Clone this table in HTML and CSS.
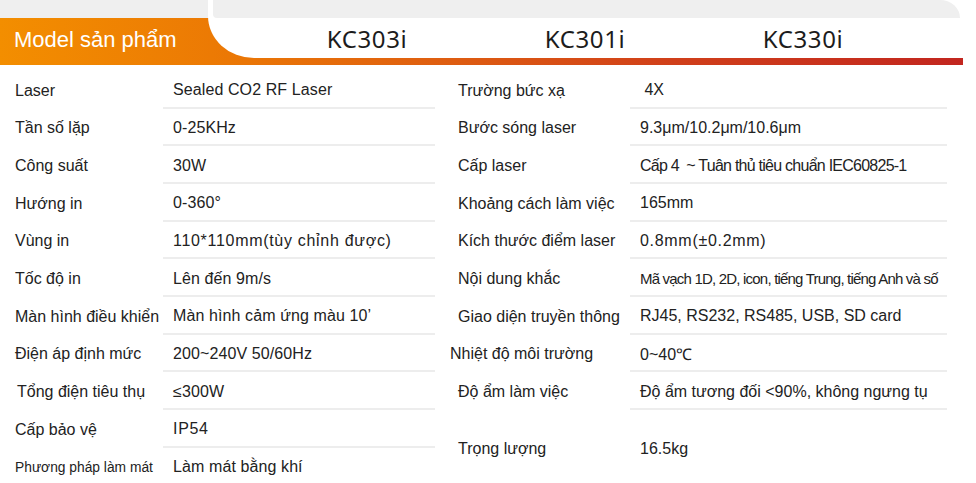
FILE: index.html
```html
<!DOCTYPE html>
<html lang="vi">
<head>
<meta charset="utf-8">
<title>Model sản phẩm</title>
<link rel="stylesheet" href="styles.css">
</head>
<body>
<div class="page">
  <div class="head">
    <div class="tab">
      <div class="tab-top"></div>
      <div class="tab-title">Model sản phẩm</div>
    </div>
    <div class="models">
      <div class="models-panel">
        <div class="models-top"></div>
        <div class="models-names">
          <span class="model">KC303i</span>
          <span class="model">KC301i</span>
          <span class="model">KC330i</span>
        </div>
      </div>
    </div>
  </div>

  <div class="specs">
    <div class="table left">
      <div class="label">Laser</div><div class="value">Sealed CO2 RF Laser</div>
      <div class="label">Tần số lặp</div><div class="value">0-25KHz</div>
      <div class="label">Công suất</div><div class="value">30W</div>
      <div class="label">Hướng in</div><div class="value">0-360°</div>
      <div class="label">Vùng in</div><div class="value wide">110*110mm(tùy chỉnh được)</div>
      <div class="label">Tốc độ in</div><div class="value">Lên đến 9m/s</div>
      <div class="label">Màn hình điều khiển</div><div class="value">Màn hình cảm ứng màu 10’</div>
      <div class="label">Điện áp định mức</div><div class="value">200~240V 50/60Hz</div>
      <div class="label shift">Tổng điện tiêu thụ</div><div class="value">≤300W</div>
      <div class="label">Cấp bảo vệ</div><div class="value wide">IP54</div>
      <div class="label small">Phương pháp làm mát</div><div class="value last">Làm mát bằng khí</div>
    </div>
    <div class="table right">
      <div class="label">Trường bức xạ</div><div class="value">&nbsp;4X</div>
      <div class="label">Bước sóng laser</div><div class="value">9.3μm/10.2μm/10.6μm</div>
      <div class="label">Cấp laser</div><div class="value tight">Cấp 4&nbsp; ~ Tuân thủ tiêu chuẩn IEC60825-1</div>
      <div class="label">Khoảng cách làm việc</div><div class="value">165mm</div>
      <div class="label">Kích thước điểm laser</div><div class="value wide">0.8mm(±0.2mm)</div>
      <div class="label">Nội dung khắc</div><div class="value tighter">Mã vạch 1D, 2D, icon, tiếng Trung, tiếng Anh và số</div>
      <div class="label">Giao diện truyền thông</div><div class="value">RJ45, RS232, RS485, USB, SD card</div>
      <div class="label out">Nhiệt độ môi trường</div><div class="value">0~40℃</div>
      <div class="label">Độ ẩm làm việc</div><div class="value">Độ ẩm tương đối &lt;90%, không ngưng tụ</div>
      <div class="label tall">Trọng lượng</div><div class="value tall last">16.5kg</div>
    </div>
  </div>
</div>
</body>
</html>
```

FILE: styles.css
```css
* { box-sizing: border-box; }

html, body {
  margin: 0;
  padding: 0;
  background: #ffffff;
}

body {
  font-family: "Liberation Sans", Arial, sans-serif;
  color: #222222;
}

.page {
  width: 976px;
  height: 483px;
  overflow: hidden;
}

/* ---------- header ---------- */
.head {
  display: flex;
  width: 963px;
  height: 65px;
  background: linear-gradient(90deg, #f38e00 0%, #ec7a04 22%, #df5f10 45%, #d03f1a 70%, #c2261f 100%) 0 18px / 100% 47px no-repeat;
}

.tab {
  width: 208px;
  display: flex;
  flex-direction: column;
}

.tab-top {
  height: 18px;
  background: #efefef;
}

.tab-title {
  flex: 1;
  color: #ffffff;
  font-size: 22px;
  padding-left: 14px;
  display: flex;
  align-items: center;
  padding-bottom: 3px;
}

.models {
  flex: 1;
}

.models-panel {
  height: 58px;
  background: #ffffff;
  border-bottom-left-radius: 46px 42px;
  display: flex;
  flex-direction: column;
}

.models-top {
  height: 18px;
  margin-left: 5px;
  margin-right: 3px;
  background: #efefef;
  border-top-right-radius: 20px 18px;
  border-bottom-left-radius: 4px;
}

.models-names {
  flex: 1;
  display: flex;
  align-items: center;
  padding-left: 50px;
  padding-top: 1px;
}

.model {
  width: 218px;
  text-align: center;
  font-family: "Noto Sans", "Open Sans", sans-serif;
  font-size: 24px;
  letter-spacing: 0.6px;
  color: #1c1c1c;
}

/* ---------- spec tables ---------- */
.specs {
  display: flex;
  padding-top: 6px;
}

.table {
  display: grid;
  grid-auto-rows: 37.67px;
  font-size: 16px;
}

.table.left {
  width: 435px;
  grid-template-columns: 163px 272px;
}

.table.right {
  margin-left: 10px;
  width: 502px;
  grid-template-columns: 185px 317px;
}

.label {
  display: flex;
  align-items: center;
  padding-top: 2px;
  white-space: nowrap;
}

.left .label { padding-left: 15px; }
.right .label { padding-left: 13px; }
.left .label.shift { padding-left: 17px; }
.right .label.out { padding-left: 5px; }

.label.small { font-size: 13.8px; }

.value {
  display: flex;
  align-items: center;
  padding-top: 3px;
  border-bottom: 2px solid #ededed;
  white-space: nowrap;
}

.left .value { padding-left: 10px; letter-spacing: 0.1px; }
.right .value { padding-left: 10px; }

.value.last { border-bottom: none; padding-top: 2px; }

.value.wide { letter-spacing: 0.7px; }
.value.tight { letter-spacing: -0.75px; }
.value.tighter { font-size: 15px; letter-spacing: -0.8px; }

.tall { grid-row: span 2; }
```
